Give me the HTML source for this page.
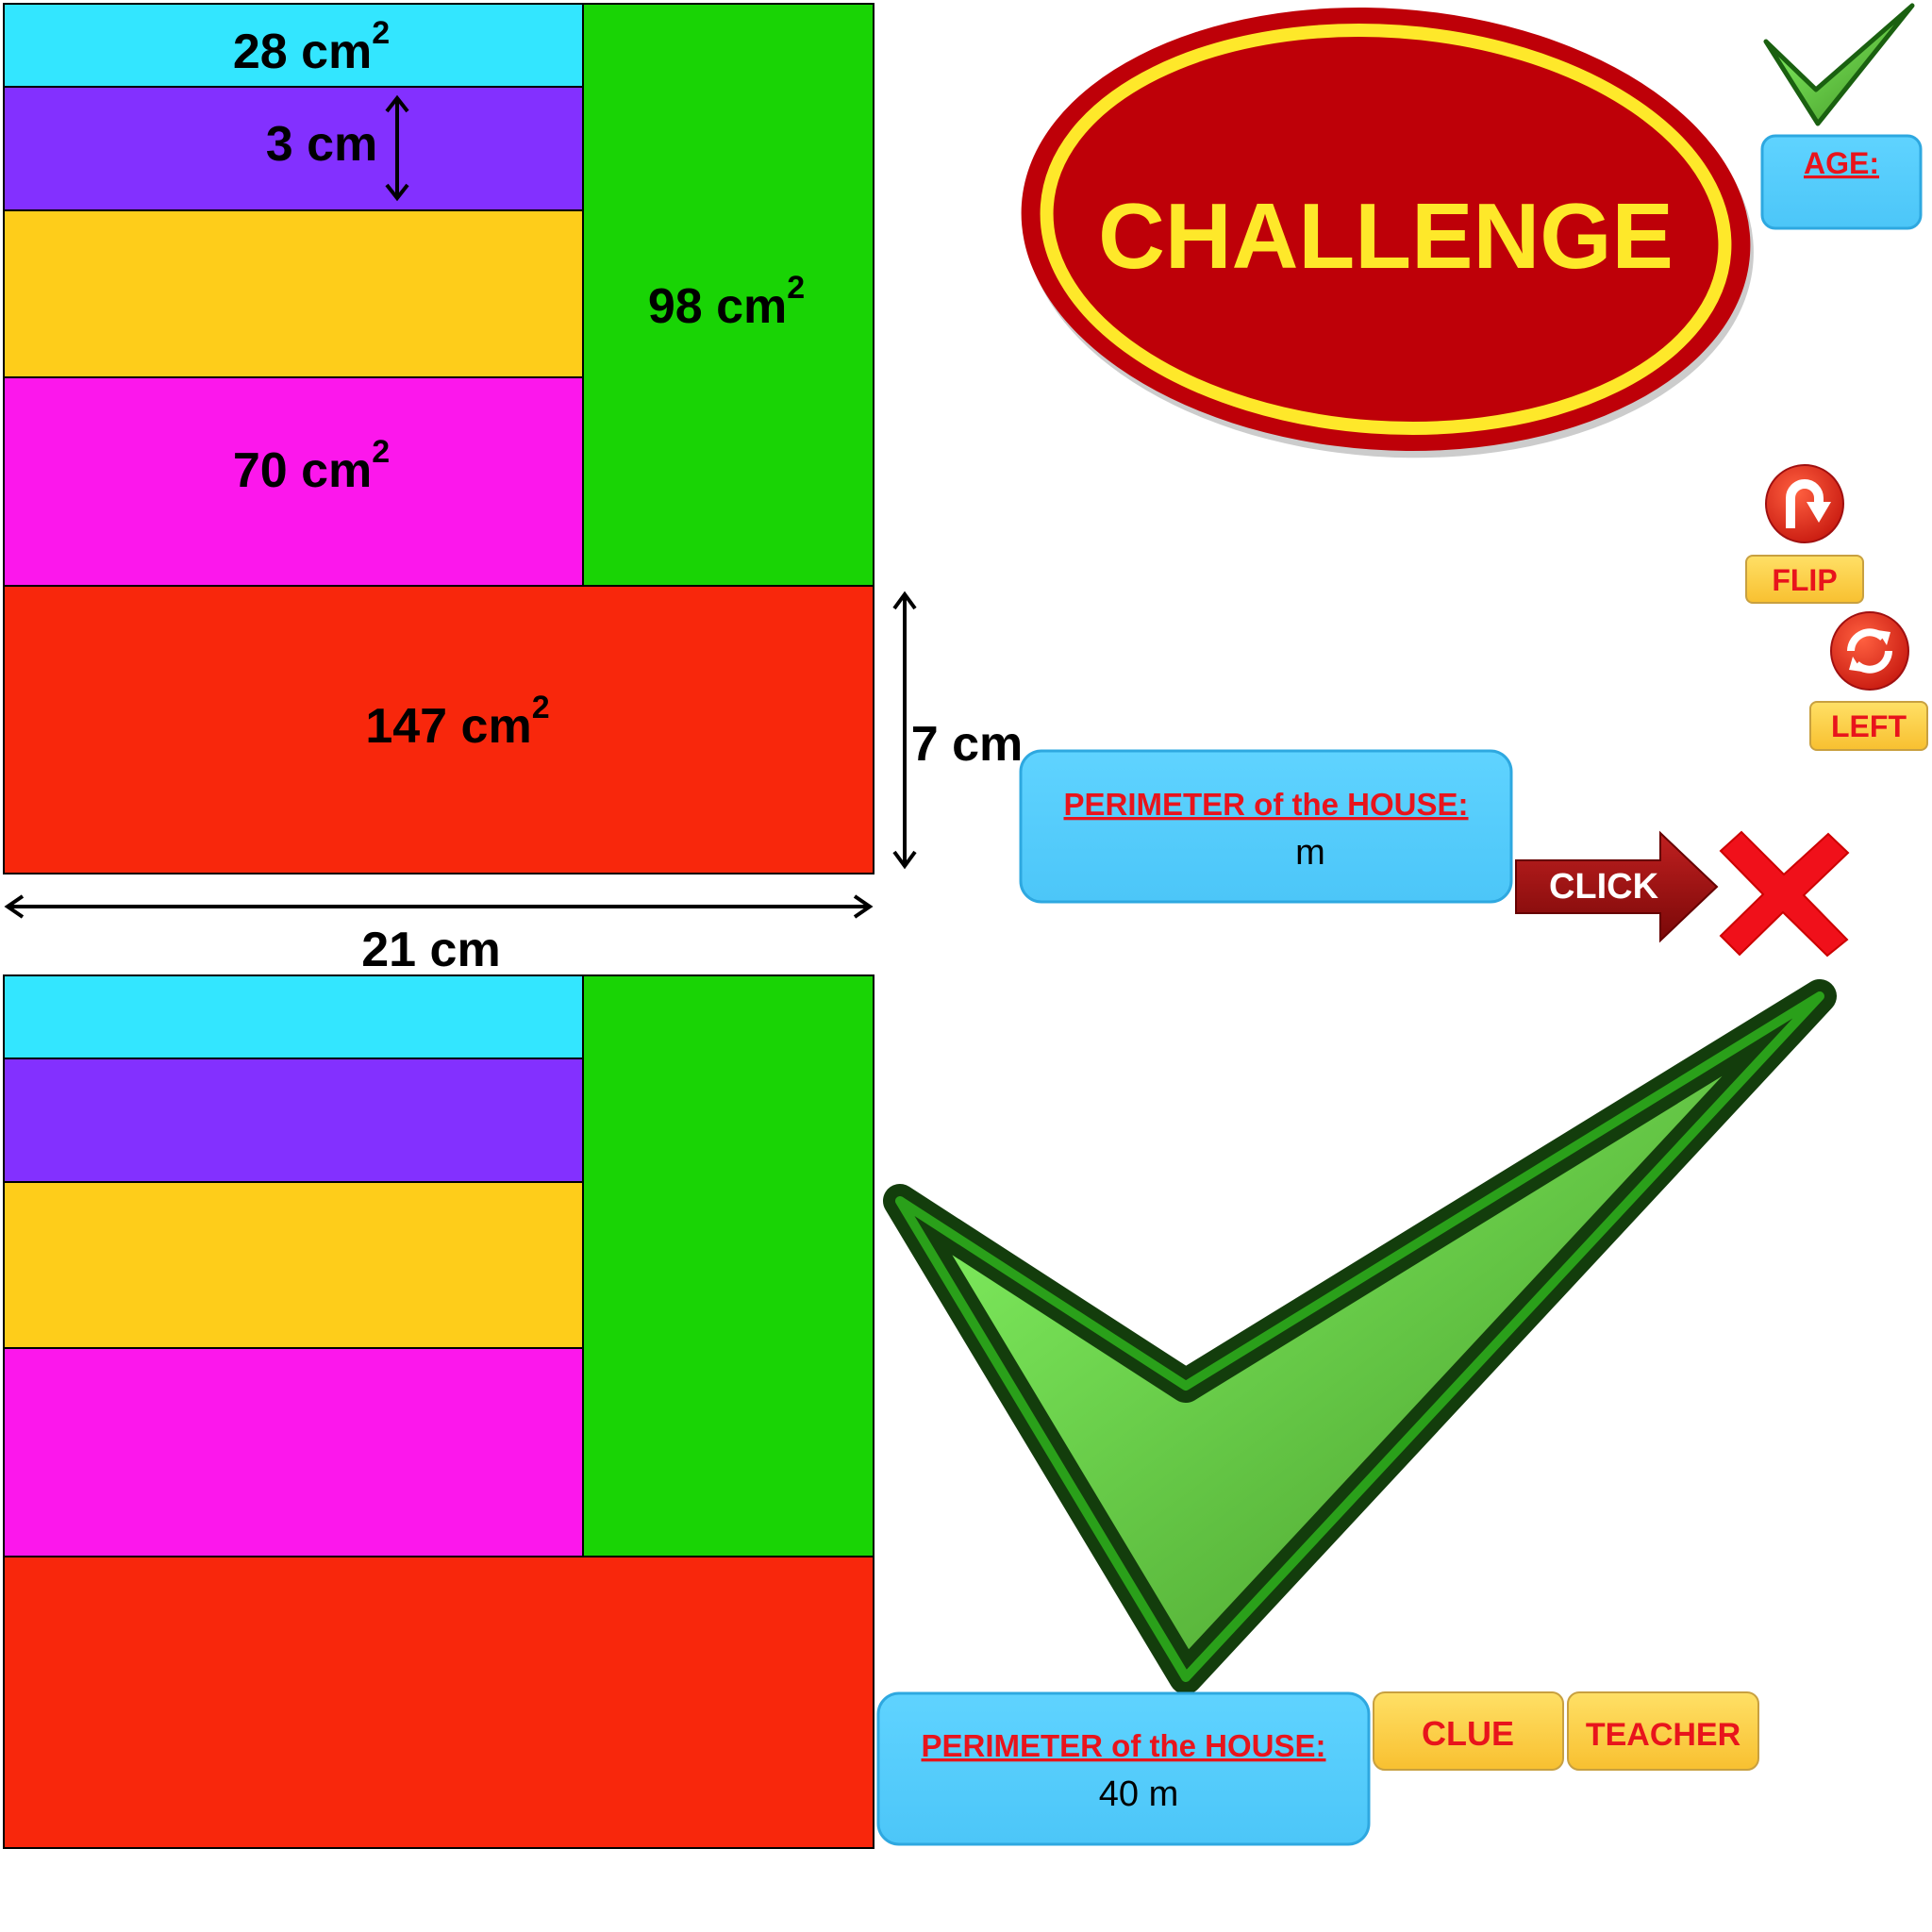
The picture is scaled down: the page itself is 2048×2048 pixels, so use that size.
<!DOCTYPE html>
<html><head><meta charset="utf-8"><style>
html,body{margin:0;padding:0;background:#fff;}
svg{display:block}
.h{font-family:"Liberation Sans",sans-serif;font-weight:bold;fill:#000;}
.b{font-family:"Liberation Sans",sans-serif;font-weight:bold;}
</style></head><body>
<svg width="2048" height="2048" viewBox="0 0 2048 2048" xmlns="http://www.w3.org/2000/svg">
<defs>
<linearGradient id="blue" x1="0" y1="0" x2="0" y2="1"><stop offset="0" stop-color="#5fd3ff"/><stop offset="1" stop-color="#4cc6f8"/></linearGradient>
<linearGradient id="gold" x1="0" y1="0" x2="0" y2="1"><stop offset="0" stop-color="#ffe066"/><stop offset="1" stop-color="#f8c030"/></linearGradient>
<linearGradient id="grn" x1="0" y1="0" x2="1" y2="1"><stop offset="0" stop-color="#8cff6a"/><stop offset="1" stop-color="#3e8f22"/></linearGradient>
<linearGradient id="arr" x1="0" y1="0" x2="0" y2="1"><stop offset="0" stop-color="#c02020"/><stop offset="1" stop-color="#7a0808"/></linearGradient>
<radialGradient id="rc" cx="0.4" cy="0.35" r="0.7"><stop offset="0" stop-color="#ff6040"/><stop offset="1" stop-color="#c81a10"/></radialGradient>
</defs>
<g stroke="#000" stroke-width="2">
<rect x="4" y="4" width="614" height="88" fill="#33e6ff"/>
<rect x="4" y="92" width="614" height="131" fill="#8330ff"/>
<rect x="4" y="223" width="614" height="177" fill="#fecd1a"/>
<rect x="4" y="400" width="614" height="221" fill="#fc17ec"/>
<rect x="618" y="4" width="308" height="617" fill="#19d405"/>
<rect x="4" y="621" width="922" height="305" fill="#f8270c"/>
<rect x="4" y="1034" width="614" height="88" fill="#33e6ff"/>
<rect x="4" y="1122" width="614" height="131" fill="#8330ff"/>
<rect x="4" y="1253" width="614" height="176" fill="#fecd1a"/>
<rect x="4" y="1429" width="614" height="221" fill="#fc17ec"/>
<rect x="618" y="1034" width="308" height="616" fill="#19d405"/>
<rect x="4" y="1650" width="922" height="309" fill="#f8270c"/>
</g>
<g stroke="#000" stroke-width="4" fill="none">
<path d="M421 104V210M410 118L421 104L432 118M410 196L421 210L432 196"/>
<path d="M959 630V918M948 645L959 630L970 645M948 903L959 918L970 903"/>
<path d="M8 961H922M24 950L8 961L24 972M906 950L922 961L906 972"/>
</g>
<g class="h" font-size="52" text-anchor="middle">
<text x="330" y="72">28 cm<tspan font-size="34" dy="-26">2</tspan></text>
<text x="341" y="170">3 cm</text>
<text x="770" y="342">98 cm<tspan font-size="34" dy="-26">2</tspan></text>
<text x="330" y="516">70 cm<tspan font-size="34" dy="-26">2</tspan></text>
<text x="485" y="787">147 cm<tspan font-size="34" dy="-26">2</tspan></text>
<text x="1025" y="806">7 cm</text>
<text x="457" y="1024">21 cm</text>
</g>
<!-- challenge -->
<g transform="rotate(4 1469 243)">
<ellipse cx="1473" cy="250" rx="387" ry="234" fill="#999" opacity="0.5"/>
<ellipse cx="1469" cy="243" rx="387" ry="234" fill="#be0008"/>
<ellipse cx="1469" cy="243" rx="360" ry="210" fill="none" stroke="#fee82a" stroke-width="14"/>
</g>
<text class="b" x="1469" y="284" font-size="98" text-anchor="middle" fill="#fee82a">CHALLENGE</text>
<!-- small check -->
<path d="M1872 44L1927 131L2027 6L1925 95Z" fill="url(#grn)" stroke="#1a6010" stroke-width="5" stroke-linejoin="round"/>
<!-- AGE -->
<rect x="1868" y="144" width="168" height="98" rx="14" fill="url(#blue)" stroke="#2ea8e0" stroke-width="3"/>
<text class="b" x="1952" y="184" font-size="32" text-anchor="middle" fill="#e8141c" text-decoration="underline">AGE:</text>
<!-- flip -->
<circle cx="1913" cy="534" r="41" fill="url(#rc)" stroke="#a01010" stroke-width="2"/>
<path d="M1898 560V528a15 15 0 0 1 30 0v6" fill="none" stroke="#fff" stroke-width="10"/>
<path d="M1915 532h26l-13 22z" fill="#fff"/>
<rect x="1851" y="589" width="124" height="50" rx="7" fill="url(#gold)" stroke="#c8a040" stroke-width="2"/>
<text class="b" x="1913" y="626" font-size="32" text-anchor="middle" fill="#e8141c">FLIP</text>
<circle cx="1982" cy="690" r="41" fill="url(#rc)" stroke="#a01010" stroke-width="2"/>
<path d="M1962 690a20 20 0 0 1 34-14M2002 690a20 20 0 0 1-34 14" fill="none" stroke="#fff" stroke-width="8"/>
<path d="M1990 668l14 2-4 14zM1974 712l-14-2 4-14z" fill="#fff"/>
<rect x="1919" y="744" width="124" height="51" rx="7" fill="url(#gold)" stroke="#c8a040" stroke-width="2"/>
<text class="b" x="1981" y="781" font-size="32" text-anchor="middle" fill="#e8141c">LEFT</text>
<!-- perimeter 1 -->
<rect x="1082" y="796" width="520" height="160" rx="22" fill="url(#blue)" stroke="#2ea8e0" stroke-width="3"/>
<text class="b" x="1342" y="864" font-size="33" text-anchor="middle" fill="#e8141c" text-decoration="underline">PERIMETER of the HOUSE:</text>
<text x="1389" y="916" font-family="Liberation Sans,sans-serif" font-size="38" text-anchor="middle">m</text>
<!-- click -->
<path d="M1607 912H1760V883L1820 940L1760 997V968H1607Z" fill="url(#arr)" stroke="#600" stroke-width="2"/>
<text class="b" x="1700" y="952" font-size="38" text-anchor="middle" fill="#fff">CLICK</text>
<!-- X -->
<path d="M1824 902L1846 882L1891 927L1938 884L1959 904L1912 949L1958 996L1937 1013L1890 967L1844 1012L1824 992L1869 948Z" fill="#f0101a" stroke="#c00" stroke-width="2"/>
<!-- big check -->
<path d="M954 1273L1257 1778L1929 1056L1257 1469Z" fill="url(#grn)" stroke="#133d0c" stroke-width="36" stroke-linejoin="round"/>
<path d="M954 1273L1257 1778L1929 1056L1257 1469Z" fill="none" stroke="#2aa01a" stroke-width="10" stroke-linejoin="round"/>
<!-- perimeter 2 -->
<rect x="931" y="1795" width="520" height="160" rx="22" fill="url(#blue)" stroke="#2ea8e0" stroke-width="3"/>
<text class="b" x="1191" y="1862" font-size="33" text-anchor="middle" fill="#e8141c" text-decoration="underline">PERIMETER of the HOUSE:</text>
<text x="1207" y="1914" font-family="Liberation Sans,sans-serif" font-size="38" text-anchor="middle">40 m</text>
<rect x="1456" y="1794" width="201" height="82" rx="12" fill="url(#gold)" stroke="#c8a040" stroke-width="2"/>
<text class="b" x="1556" y="1850" font-size="36" text-anchor="middle" fill="#e8141c">CLUE</text>
<rect x="1662" y="1794" width="202" height="82" rx="12" fill="url(#gold)" stroke="#c8a040" stroke-width="2"/>
<text class="b" x="1763" y="1850" font-size="34" text-anchor="middle" fill="#e8141c">TEACHER</text>
</svg>
</body></html>
